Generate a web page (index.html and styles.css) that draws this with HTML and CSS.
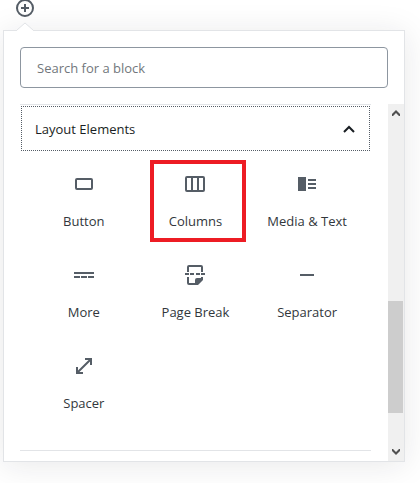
FILE: index.html
```html
<!DOCTYPE html>
<html lang="en">
<head>
<meta charset="utf-8">
<title>Block inserter</title>
<link rel="stylesheet" href="styles.css">
</head>
<body>
<main class="inserter">
  <button class="toggle" type="button" aria-label="Add block">
    <svg viewBox="0 0 20 20" width="20" height="20"><circle cx="10" cy="10" r="8" fill="none" stroke="currentColor" stroke-width="2"/><path d="M9 6h2v3h3v2h-3v3H9v-3H6V9h3z"/></svg>
  </button>
  <section class="popover">
    <svg class="pointer" viewBox="0 0 18 9" width="18" height="9"><path d="M1 8l8-7 8 7v1H1z" fill="#fff"/><path d="M1 8l8-7 8 7" fill="none" stroke="#e2e4e7"/></svg>
    <label class="search"><input type="search" placeholder="Search for a block" aria-label="Search for a block"></label>
    <div class="results">
      <div class="panel">
        <button class="panel-title" type="button" aria-expanded="true">
          <span>Layout Elements</span>
          <svg viewBox="0 0 12 8" width="12" height="8"><path d="M1 7l5-5 5 5" fill="none" stroke="currentColor" stroke-width="2"/></svg>
        </button>
        <ul class="blocks">
          <li><button class="block" type="button">
            <svg viewBox="0 0 24 24"><rect x="4" y="7" width="16" height="10" rx="1" fill="none" stroke="currentColor" stroke-width="2"/></svg>
            <span>Button</span></button></li>
          <li><button class="block highlighted" type="button">
            <svg viewBox="0 0 24 24"><path fill-rule="evenodd" d="M4 4h16a2 2 0 0 1 2 2v12a2 2 0 0 1-2 2H4a2 2 0 0 1-2-2V6a2 2 0 0 1 2-2zM4 6v12h4V6zM10 6v12h4V6zM16 6v12h4V6z"/></svg>
            <span>Columns</span></button></li>
          <li><button class="block" type="button">
            <svg viewBox="0 0 24 24"><path d="M3 5h8v14H3zM13 7h8v2h-8zM13 11h8v2h-8zM13 15h8v2h-8z"/></svg>
            <span>Media &amp; Text</span></button></li>
          <li><button class="block" type="button">
            <svg viewBox="0 0 24 24"><path d="M2 9h20v2H2zM2 13h6v2H2zM9 13h6v2H9zM16 13h6v2h-6z"/></svg>
            <span>More</span></button></li>
          <li><button class="block" type="button">
            <svg viewBox="0 0 24 24"><path d="M4 9V4a2 2 0 0 1 2-2h12a2 2 0 0 1 2 2v5h-2V4H6v5zM2 10h4v2H2zM7 10h4v2H7zM13 10h4v2h-4zM18 10h4v2h-4zM4 14h2v6h7v2H6a2 2 0 0 1-2-2zM18 14h2v3l-5 5h-3v-5a2 2 0 0 1 2-2h4z"/></svg>
            <span>Page Break</span></button></li>
          <li><button class="block" type="button">
            <svg viewBox="0 0 24 24"><path d="M5 11h14v2H5z"/></svg>
            <span>Separator</span></button></li>
          <li><button class="block" type="button">
            <svg viewBox="0 0 24 24"><path d="M13 4h7v7h-2V7.400L7.400 18H11v2H4v-7h2v3.600L16.600 6H13z"/></svg>
            <span>Spacer</span></button></li>
        </ul>
      </div>
      <div class="scrollbar" aria-hidden="true">
        <svg viewBox="0 0 8 6" width="8" height="6"><path d="M0 4l4-4 4 4v2H7L4 3 1 6H0z"/></svg>
        <div class="track"><div class="thumb"></div></div>
        <svg viewBox="0 0 8 6" width="8" height="6"><path d="M0 2l4 4 4-4V0H7L4 3 1 0H0z"/></svg>
      </div>
    </div>
  </section>
</main>
</body>
</html>
```
FILE: styles.css
```css
* { box-sizing: border-box; }

body {
  margin: 0;
  background: #fff;
  color: #191e23;
  font: 13px/20px "Open Sans", "Noto Sans", sans-serif;
  overflow: hidden;
}

button {
  margin: 0;
  padding: 0;
  border: 0;
  background: none;
  color: inherit;
  font: inherit;
}

svg { display: block; fill: currentColor; }

.inserter { padding: 0 15px 22px 3px; }

.toggle {
  display: block;
  height: 20px;
  margin: -2px 0 12px 12px;
  color: #555d66;
}

.popover {
  position: relative;
  border: 1px solid #e2e4e7;
  background: #fff;
  box-shadow: 0 3px 30px rgba(25, 30, 35, .1);
}

.pointer { position: absolute; top: -9px; left: 12px; }

.search { display: block; padding: 16px; }

.search input {
  display: block;
  width: 100%;
  height: 41px;
  padding: 0 16px;
  border: 1px solid #8d96a0;
  border-radius: 4px;
  background: #fff;
  color: #32373c;
  font: inherit;
  appearance: none;
}

.search input::placeholder { color: #72777c; opacity: 1; }

.results { display: flex; justify-content: space-between; padding-left: 16px; }

.panel {
  flex: 1;
  margin: 0 17px 10px 0;
  border: solid #e2e4e7;
  border-width: 1px 0;
}

.panel-title {
  display: flex;
  align-items: center;
  justify-content: space-between;
  width: calc(100% - 2px);
  height: 45px;
  margin: 1px;
  padding: 0 14px 0 13px;
  border: 1px dotted #555d66;
  font-weight: 500;
}

.blocks {
  display: grid;
  grid-template-columns: repeat(3, 1fr);
  row-gap: 9px;
  margin: 0;
  padding: 8px 8px 26px;
  list-style: none;
}

.block {
  position: relative;
  display: flex;
  flex-direction: column;
  align-items: center;
  gap: 15px;
  width: 100%;
  height: 82px;
  padding-top: 12px;
  color: #32373c;
  white-space: nowrap;
}

.block svg { width: 24px; height: 24px; color: #555d66; }

.highlighted::after {
  content: "";
  position: absolute;
  inset: 0 5px 0 10px;
  border: 4px solid #ed1c24;
}

.scrollbar {
  display: flex;
  flex-direction: column;
  align-items: center;
  gap: 6px;
  width: 16px;
  padding: 6px 0;
  background: #f0f0f0;
  color: #505050;
}

.track {
  display: grid;
  grid-template-rows: 179fr 112fr 30fr;
  flex: 1;
  align-self: stretch;
  padding-right: 1px;
}

.thumb { grid-row: 2; background: #cdcdcd; }
```
